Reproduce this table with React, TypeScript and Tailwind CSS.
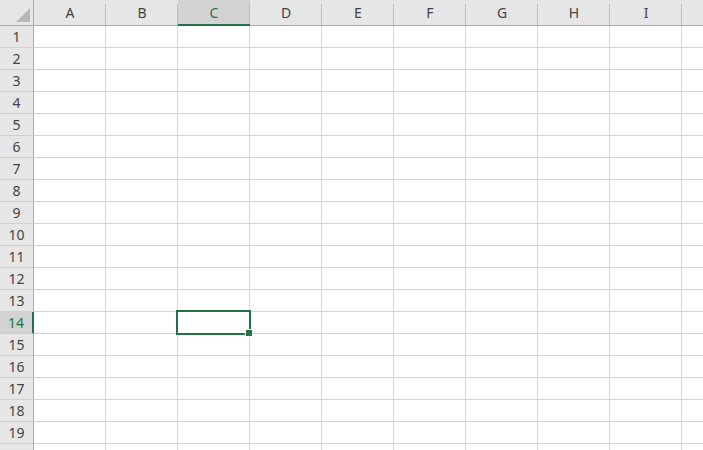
import React from "react";

const COLS = ["A", "B", "C", "D", "E", "F", "G", "H", "I", ""];
const ROWS = Array.from({ length: 20 }, (_, i) => i + 1);

export default function App() {
  return (
    <div
      className="w-[703px] h-[450px] overflow-hidden bg-white text-[14px] text-[#444444]"
      style={{ fontFamily: '"Noto Sans", "Open Sans", Arial, sans-serif' }}
    >
      <div className="grid grid-cols-[34px_repeat(9,72px)_72px] grid-rows-[26px_repeat(20,22px)]">
        {/* corner */}
        <div className="relative bg-[#e6e6e6] border-r border-b border-[#ababab]">
          <div className="absolute right-[3px] bottom-[3px] w-0 h-0 border-l-[14px] border-l-transparent border-b-[14px] border-b-[#b7b7b7]" />
        </div>
        {COLS.map((c, i) => {
          const sel = c === "C";
          return (
            <div
              key={"h" + i}
              className={
                "relative flex items-center justify-center pt-[1px] " +
                (sel
                  ? "bg-[#d2d2d2] text-[#217346] border-b-2 border-[#217346]"
                  : "bg-[#e6e6e6] border-b border-[#ababab]")
              }
            >
              <span className="leading-none">{c}</span>
              <div className="absolute right-0 top-[4px] bottom-0 w-px bg-[#bdbdbd]" />
            </div>
          );
        })}
        {ROWS.map((r) => (
          <React.Fragment key={"r" + r}>
            <div
              className={
                "flex items-center justify-center border-b border-[#cfcfcf] " +
                (r === 14
                  ? "bg-[#d2d2d2] text-[#217346] border-r-2 border-r-[#217346]"
                  : "bg-[#e6e6e6] border-r border-r-[#ababab]")
              }
            >
              {r < 20 && <span className="leading-none">{r}</span>}
            </div>
            {COLS.map((c, i) => (
              <div
                key={"c" + r + "-" + i}
                className="relative bg-white border-r border-b border-[#d4d4d4]"
              >
                {r === 14 && c === "C" && (
                  <>
                    <div className="absolute -left-[2px] -top-[2px] w-[75px] h-[25px] border-2 border-[#217346] z-10" />
                    <div className="absolute left-[67px] top-[17px] w-[8px] h-[8px] bg-[#217346] border border-white z-20" />
                  </>
                )}
              </div>
            ))}
          </React.Fragment>
        ))}
      </div>
    </div>
  );
}
